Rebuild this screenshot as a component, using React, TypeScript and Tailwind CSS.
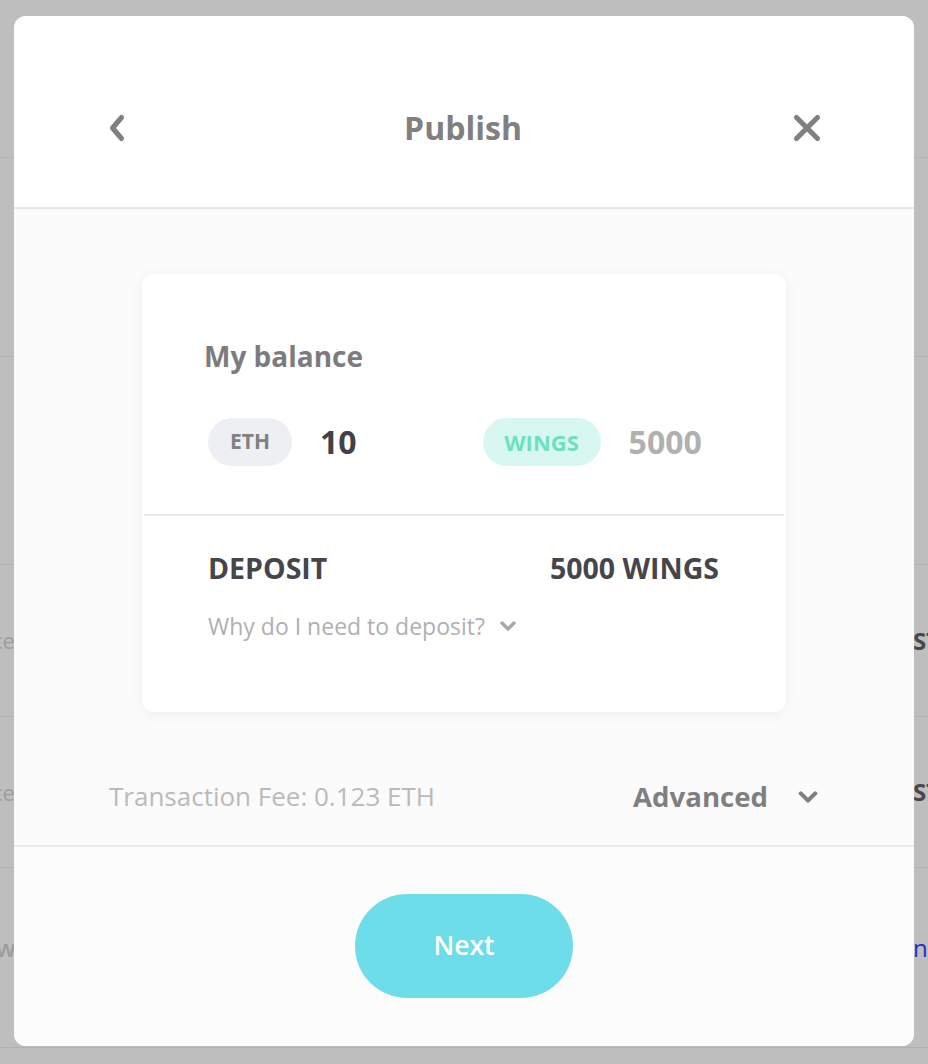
import React from "react";

const font = { fontFamily: '"Open Sans", "Noto Sans", Arial, sans-serif' };

function ChevronDown({ className = "", sw = 3.4 }: { className?: string; sw?: number }) {
  return (
    <svg viewBox="0 0 16 10" className={className} fill="none">
      <path d="M2 2 L8 8 L14 2" stroke="currentColor" strokeWidth={sw} strokeLinecap="round" strokeLinejoin="round" />
    </svg>
  );
}

function RightPeek({ children, className = "" }: { children: React.ReactNode; className?: string }) {
  return (
    <div className="ml-auto w-[15px] shrink-0 overflow-visible whitespace-nowrap">
      <span className={className}>{children}</span>
    </div>
  );
}

export default function App() {
  return (
    <div className="relative w-[928px] h-[1064px] overflow-hidden bg-[#bebebf]" style={font}>
      {/* background page */}
      <div className="flex flex-col">
        <div className="h-[158px] border-b border-[#b1b1b2]" />
        <div className="h-[199px] border-b border-[#b1b1b2]" />
        <div className="h-[208px] border-b border-[#b1b1b2]" />
        <div className="h-[152px] border-b border-[#b1b1b2] flex items-center">
          <span className="ml-[-8px] text-[22px] text-[#9c9c9d]">ce</span>
          <RightPeek className="text-[24px] font-bold text-[#48484b]">STATUS</RightPeek>
        </div>
        <div className="h-[151px] border-b border-[#b1b1b2] flex items-center">
          <span className="ml-[-8px] text-[22px] text-[#9c9c9d]">ce</span>
          <RightPeek className="text-[24px] font-bold text-[#48484b]">STATUS</RightPeek>
        </div>
        <div className="h-[180px] border-b border-[#b1b1b2] flex items-center pb-[20px]">
          <span className="ml-[-4px] text-[24px] font-semibold text-[#9c9c9d]">w</span>
          <RightPeek className="text-[24px] text-[#1f2fd0]">nn</RightPeek>
        </div>
      </div>

      {/* modal */}
      <div className="absolute left-[14px] top-[16px] w-[900px] h-[1030px] rounded-[12px] overflow-hidden bg-[#fbfbfb] flex flex-col">
        <div className="h-[193px] shrink-0 bg-white border-b-2 border-[#e6e6e6] grid grid-cols-[1fr_auto_1fr] items-center pt-[32px] pl-[93px] pr-[91px]">
          <div className="flex justify-start">
            <svg viewBox="0 0 20 30" className="w-[20px] h-[30px] text-[#808080]" fill="none">
              <path d="M14.5 4.5 L5.5 15 L14.5 25.5" stroke="currentColor" strokeWidth="5" strokeLinecap="round" strokeLinejoin="round" />
            </svg>
          </div>
          <span className="mr-[4px] text-[32px] font-bold text-[#808080] leading-none">Publish</span>
          <div className="flex justify-end">
            <svg viewBox="0 0 32 32" className="w-[32px] h-[32px] text-[#808080]" fill="none">
              <path d="M5.5 5.5 L26.5 26.5 M26.5 5.5 L5.5 26.5" stroke="currentColor" strokeWidth="5.2" strokeLinecap="round" />
            </svg>
          </div>
        </div>

        <div className="flex flex-col items-center pt-[65px] h-[636px] shrink-0">
          <div className="w-[644px] h-[438px] bg-white rounded-[12px] shadow-[0_2px_14px_rgba(0,0,0,0.05)] flex flex-col">
            <div className="h-[240px] pl-[62px] pr-[66px] flex flex-col">
              <div className="mt-[68px] text-[28px] font-bold text-[#7c7c7e] leading-none">My balance</div>
              <div className="mt-[48px] flex items-center">
                <div className="w-[84px] h-[48px] rounded-full bg-[#eeeff3] flex items-center justify-center text-[21px] font-bold text-[#818181] ml-[4px]">ETH</div>
                <span className="ml-[28px] text-[32px] font-bold text-[#424246]">10</span>
                <div className="ml-[126px] w-[118px] h-[48px] rounded-full bg-[#d8f7f0] flex items-center justify-center text-[22px] font-bold text-[#6ce1c2]">WINGS</div>
                <span className="ml-[28px] text-[32px] font-bold text-[#b0b0b0]">5000</span>
              </div>
            </div>
            <div className="mx-[2px] h-[2px] bg-[#e8e8e8]" />
            <div className="pl-[66px] pr-[67px] flex flex-col">
              <div className="mt-[38px] flex items-center justify-between">
                <span className="text-[28.5px] font-bold text-[#46464a] leading-none">DEPOSIT</span>
                <span className="text-[28.5px] font-bold text-[#46464a] leading-none">5000 WINGS</span>
              </div>
              <div className="mt-[32px] flex items-center">
                <span className="text-[23px] text-[#b0b0b0] leading-none">Why do I need to deposit?</span>
                <ChevronDown className="ml-[15px] w-[16px] h-[10px] text-[#a9a9a9]" />
              </div>
            </div>
          </div>
          <div className="w-full mt-[64px] pl-[95px] pr-[96px] flex items-center justify-between">
            <span className="text-[26px] text-[#bababa]">Transaction Fee: 0.123 ETH</span>
            <div className="flex items-center">
              <span className="text-[27.6px] font-bold text-[#7f7f81]">Advanced</span>
              <ChevronDown className="ml-[30px] w-[20px] h-[12px] text-[#7f7f81]" />
            </div>
          </div>
        </div>

        <div className="h-[2px] bg-[#e8e8e8] shrink-0" />
        <div className="flex-1 bg-[#fcfcfc] flex justify-center pt-[47px]">
          <button className="w-[218px] h-[104px] rounded-full bg-[#6ddde9] text-white text-[26.5px] font-semibold">Next</button>
        </div>
      </div>
    </div>
  );
}
